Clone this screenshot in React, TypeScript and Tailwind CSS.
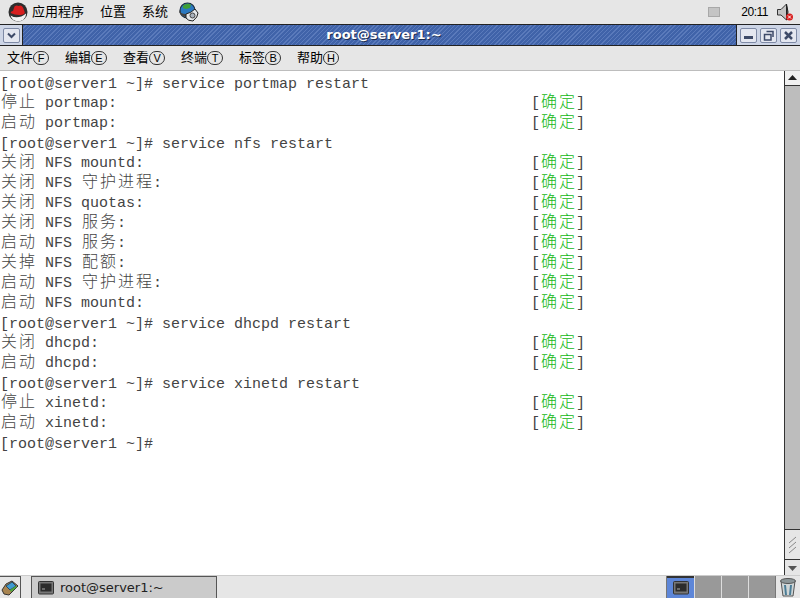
const MONO = 'font-["Liberation_Mono","Noto_Sans_CJK_SC",monospace]'

type Line = { text: string; ok?: boolean }

const lines: Line[] = [
  { text: '[root@server1 ~]# service portmap restart' },
  { text: '停止 portmap:', ok: true },
  { text: '启动 portmap:', ok: true },
  { text: '[root@server1 ~]# service nfs restart' },
  { text: '关闭 NFS mountd:', ok: true },
  { text: '关闭 NFS 守护进程:', ok: true },
  { text: '关闭 NFS quotas:', ok: true },
  { text: '关闭 NFS 服务:', ok: true },
  { text: '启动 NFS 服务:', ok: true },
  { text: '关掉 NFS 配额:', ok: true },
  { text: '启动 NFS 守护进程:', ok: true },
  { text: '启动 NFS mountd:', ok: true },
  { text: '[root@server1 ~]# service dhcpd restart' },
  { text: '关闭 dhcpd:', ok: true },
  { text: '启动 dhcpd:', ok: true },
  { text: '[root@server1 ~]# service xinetd restart' },
  { text: '停止 xinetd:', ok: true },
  { text: '启动 xinetd:', ok: true },
  { text: '[root@server1 ~]#' },
]

const menus = [
  ['文件', 'F'],
  ['编辑', 'E'],
  ['查看', 'V'],
  ['终端', 'T'],
  ['标签', 'B'],
  ['帮助', 'H'],
]

// terminal cells: CJK glyphs take two columns
function Cells({ text }: { text: string }) {
  return (
    <>
      {Array.from(text).map((c, i) =>
        c.charCodeAt(0) > 0x2e80 ? (
          <span key={i} className="inline-block w-[18px] text-center text-[16px] font-light">{c}</span>
        ) : (
          <span key={i} className="inline-block w-[9px] text-center whitespace-pre">{c}</span>
        ),
      )}
    </>
  )
}

function RedHat() {
  return (
    <svg width="20" height="20" viewBox="0 0 20 20">
      <circle cx="10" cy="10" r="9.5" fill="#2e2e2e" />
      <path d="M2.5 13.5 Q10 18 18 11.5 Q18.5 15 15 18 Q10 20.5 5.5 18 Q3 16 2.5 13.5Z" fill="#f2f2f2" />
      <path d="M2.5 11 Q3 9 5 9 L6.5 4.5 Q8.5 3 10.5 4 Q13.5 2.5 15 5.5 L16.5 9.5 Q17.5 11.5 15 12.5 Q9 14 2.5 11Z" fill="#d71e1e" />
    </svg>
  )
}

function Globe() {
  return (
    <svg width="21" height="20" viewBox="0 0 21 20">
      <circle cx="9.5" cy="8.5" r="7.5" fill="#2a78c0" stroke="#1c2c3c" strokeWidth="1.2" />
      <path d="M5 3.5 Q9 0.8 13 2.5 L12 6 L8 7 L5 6Z" fill="#3f9f35" />
      <path d="M1 8 Q2 12 8 12 L8 15 Q3 14 1 10Z" fill="#444" />
      <path d="M8 12 Q13 11 17 7 L20 11 Q20 15 15 19 Q10 19 8 16Z" fill="#e4e7ea" stroke="#222" strokeWidth="1" />
      <circle cx="14.5" cy="13.5" r="2.5" fill="#a9b2bd" stroke="#444" strokeWidth="1" />
    </svg>
  )
}

function Speaker() {
  return (
    <svg width="18" height="19" viewBox="0 0 18 19">
      <path d="M1.5 6.5 H5 L10.5 1 V17 L5 12 H1.5Z" fill="#c4c4c4" stroke="#333" strokeWidth="1" />
      <path d="M10.5 1 Q13.5 9 10.5 17Z" fill="#666" stroke="#222" strokeWidth="1" />
      <circle cx="13.5" cy="14" r="3.5" fill="#d81e1e" />
      <path d="M12 12.5 L15 15.5 M15 12.5 L12 15.5" stroke="#fff" strokeWidth="1" />
    </svg>
  )
}

function WinBtn({ children }: { children: React.ReactNode }) {
  return (
    <div className="w-[17px] h-[15px] rounded-[2px] border border-[#7e8aa6] bg-[#e4e7f0] flex items-center justify-center">
      <svg width="11" height="11" viewBox="0 0 11 11" fill="none">{children}</svg>
    </div>
  )
}

function Screen() {
  return (
    <svg width="16" height="14" viewBox="0 0 16 14">
      <rect x="0.5" y="0.5" width="15" height="12.5" rx="1" fill="#777" stroke="#333" />
      <rect x="2.5" y="2.5" width="11" height="8" fill="#2c2c2c" />
      <path d="M4 8 H7" stroke="#aaa" />
    </svg>
  )
}

export default function App() {
  return (
    <div className='w-[800px] h-[598px] overflow-hidden flex flex-col bg-[#e6e6e6] font-["Liberation_Sans","Noto_Sans_CJK_SC",sans-serif] text-black'>
      {/* Top panel */}
      <div className="h-6 flex items-center text-[13px] shrink-0">
        <div className="ml-2"><RedHat /></div>
        <span className="ml-1">应用程序</span>
        <span className="ml-4">位置</span>
        <span className="ml-4">系统</span>
        <div className="ml-[10px]"><Globe /></div>
        <div className="ml-auto w-3 h-2.5 bg-[#c4c4c4] border border-[#a8a8a8] mr-[21px]" />
        <span className="text-xs tracking-[-0.5px] mr-[8px]">20:11</span>
        <div className="mr-[6px]"><Speaker /></div>
      </div>

      {/* Title bar */}
      <div className="h-[22px] shrink-0 flex border-y border-[#222] bg-[#cdd5e6]">
        <div className="w-[22px] flex items-center justify-center">
          <div className="w-[17px] h-[15px] rounded-[2px] border border-[#7e8aa6] bg-[#e4e7f0] flex items-center justify-center">
            <svg width="9" height="7" viewBox="0 0 9 7" fill="none"><path d="M1 1.5 L4.5 5 L8 1.5" stroke="#3d4a68" strokeWidth="2" /></svg>
          </div>
        </div>
        <div className="w-[715px] pl-[9px] flex items-center justify-center border-x border-[#222] text-[13px] font-bold text-white font-['DejaVu_Sans',sans-serif] [text-shadow:1px_1px_0_#1c2c50] bg-[repeating-linear-gradient(135deg,#4063a9_0px,#4063a9_2px,#5a7abb_2px,#5a7abb_3px)]">
          root@server1:~
        </div>
        <div className="flex-1 flex items-center justify-center gap-[3px]">
          <WinBtn><rect x="1" y="6" width="9" height="3" fill="#3d4a68" /></WinBtn>
          <WinBtn><path d="M3.5 1.5 H10 V7 M1.5 4.5 H8 V10 H1.5Z" stroke="#3d4a68" strokeWidth="1.5" /></WinBtn>
          <WinBtn><path d="M2 2 L9 9 M9 2 L2 9" stroke="#3d4a68" strokeWidth="2.5" /></WinBtn>
        </div>
      </div>

      {/* Menu bar */}
      <div className="h-6 shrink-0 flex items-center pl-[7px] gap-[16px] text-[13px]">
        {menus.map(([label, key]) => (
          <span key={key} className="flex items-center">
            {label}
            <span className="w-[16px] h-[14px] rounded-full border border-[#333] text-[11px] leading-none flex items-center justify-center">{key}</span>
          </span>
        ))}
      </div>

      {/* Terminal */}
      <div className="flex-1 min-h-0 flex border-t border-[#bdbdbd]">
        <div className={`flex-1 bg-white pt-1 text-[15px] leading-5 text-[#444] ${MONO}`}>
          {lines.map((line, i) => (
            <div key={i} className={`h-5 flex whitespace-pre ${line.ok ? 'leading-4' : ''}`}>
              <div className="w-[531px]"><Cells text={line.text} /></div>
              {line.ok && (
                <div>
                  <Cells text="[" />
                  <span className="text-[#14b814]"><Cells text="确定" /></span>
                  <Cells text="]" />
                </div>
              )}
            </div>
          ))}
        </div>
        {/* Scrollbar */}
        <div className="w-4 flex flex-col bg-[#bdbdbd] border-l border-[#333]">
          <div className="h-[15px] bg-[#f0f0f0] border-b border-[#333] flex items-center justify-center">
            <svg width="9" height="6" viewBox="0 0 9 6"><path d="M4.5 0 L9 5 H0Z" fill="#222" /></svg>
          </div>
          <div className="flex-1" />
          <div className="h-[31px] bg-[#e6e6e6] border-y border-[#333] flex items-center justify-center">
            <svg width="10" height="18" viewBox="0 0 10 18" fill="none"><path d="M1 7 L8 1 M1 12 L8 6 M1 17 L8 11" stroke="#888" /></svg>
          </div>
          <div className="h-[15px] bg-[#e6e6e6] flex items-center justify-center">
            <svg width="9" height="6" viewBox="0 0 9 6"><path d="M4.5 6 L9 1 H0Z" fill="#555" /></svg>
          </div>
        </div>
      </div>

      {/* Bottom panel */}
      <div className="h-[23px] shrink-0 flex items-stretch border-t border-[#ccc]">
        <div className="w-[21px] border-r border-t border-[#555] flex items-center justify-center">
          <svg width="18" height="16" viewBox="0 0 18 16">
            <path d="M1 10 L5 4 L11 1 L17 6 L13 10 L8 15 L3 14Z" fill="#a88450" stroke="#333" />
            <path d="M5 6 L11 2 L15 6 L9 10Z" fill="#3f9ad0" stroke="#2a4a60" />
            <path d="M9 10 L15 6 L16 7 L10 12Z" fill="#4aa83c" />
          </svg>
        </div>
        <div className="ml-[10px] w-[186px] bg-[#cbcbcb] border border-b-0 border-[#555] flex items-center pl-[6px] gap-[6px] text-[13px] text-[#222]">
          <Screen />
          <span className="font-['DejaVu_Sans',sans-serif]">root@server1:~</span>
        </div>
        <div className="ml-auto flex border-x border-[#777]">
          <div className="w-[27px] bg-[#5d86d8] border-t-2 border-[#333] flex items-center justify-center"><Screen /></div>
          <div className="w-[27px] bg-[#999] border-l border-[#ddd]" />
          <div className="w-[27px] bg-[#999] border-l border-[#ddd]" />
          <div className="w-[27px] bg-[#999] border-l border-[#ddd]" />
        </div>
        <div className="w-[24px] flex items-center justify-center">
          <svg width="18" height="20" viewBox="0 0 18 20">
            <path d="M2 4 L16 4 L14 19 H4Z" fill="#cfd5d6" stroke="#555" />
            <path d="M6 8 L7 18 M12 8 L11 18" stroke="#4a7d96" strokeWidth="2" />
            <ellipse cx="9" cy="4" rx="7.5" ry="2.5" fill="#8c9698" stroke="#555" />
          </svg>
        </div>
      </div>
    </div>
  )
}
